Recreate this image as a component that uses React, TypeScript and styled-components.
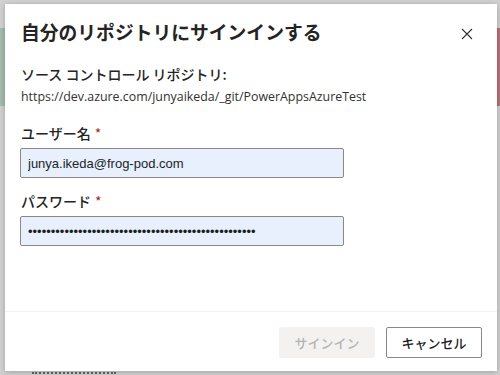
import React from "react";
import styled, { createGlobalStyle } from "styled-components";

const GlobalStyle = createGlobalStyle`
  html, body {
    margin: 0;
    padding: 0;
    background: #cfcfcf;
  }
  body {
    font-family: "Segoe UI", "Open Sans", "Noto Sans CJK JP", sans-serif;
    color: #323130;
  }
`;

const Backdrop = styled.div`
  position: relative;
  width: 500px;
  height: 375px;
  overflow: hidden;
  background: #d2d2d2;
  padding: 4px 3px 0 5px;
  box-sizing: border-box;
`;

const PeekStrip = styled.div<{ $side: "left" | "right"; $color: string }>`
  position: absolute;
  top: 28px;
  ${(p) => (p.$side === "left" ? "left: 0;" : "right: 0;")}
  width: 5px;
  height: 78px;
  background: ${(p) => p.$color};
`;

const PeekDots = styled.div`
  position: absolute;
  left: 32px;
  bottom: 1px;
  width: 84px;
  border-top: 2px dotted #666;
`;

const Dialog = styled.div`
  position: relative;
  width: 492px;
  height: 367px;
  background: #fff;
  box-shadow: 0 1px 6px rgba(0, 0, 0, 0.25);
  display: flex;
  flex-direction: column;
`;

const Header = styled.div`
  display: flex;
  align-items: flex-start;
  justify-content: space-between;
  padding: 13px 22px 0 16px;
`;

const Title = styled.h1`
  margin: 0;
  font-family: "Noto Sans CJK JP", sans-serif;
  font-size: 18.8px;
  font-weight: 700;
  line-height: 30px;
  color: #252423;
`;

const CloseButton = styled.button`
  border: none;
  background: none;
  padding: 0;
  margin-top: 9px;
  width: 16px;
  height: 16px;
  display: flex;
  align-items: center;
  justify-content: center;
  cursor: pointer;
`;

const Body = styled.div`
  flex: 1;
  padding: 17px 16px 0 16px;
  display: flex;
  flex-direction: column;
`;

const SourceLabel = styled.div`
  font-family: "Noto Sans CJK JP", sans-serif;
  font-size: 14px;
  font-weight: 500;
  line-height: 20px;
  color: #252423;
`;

const Url = styled.div`
  font-family: "Open Sans", sans-serif;
  font-size: 12.4px;
  line-height: 20px;
  margin-top: 3px;
  color: #323130;
`;

const Field = styled.div<{ $top: number }>`
  display: flex;
  flex-direction: column;
  margin-top: ${(p) => p.$top}px;
`;

const Label = styled.label`
  font-family: "Noto Sans CJK JP", sans-serif;
  font-size: 14px;
  font-weight: 500;
  line-height: 20px;
  color: #252423;
  margin-bottom: 5px;
`;

const Required = styled.span`
  color: #a4262c;
  margin-left: 4px;
  font-weight: 400;
`;

const Input = styled.input`
  width: 324px;
  height: 30px;
  box-sizing: border-box;
  margin: 0 0 0 -1px;
  padding: 0 7px;
  border: 1px solid #8a8886;
  border-radius: 2px;
  background: #e8f0fe;
  font-family: "Liberation Sans", Arial, sans-serif;
  font-size: 13px;
  color: #201f1e;
  outline: none;
`;

const Footer = styled.div`
  box-sizing: border-box;
  border-top: 1px solid #f3f2f1;
  height: 60px;
  display: flex;
  justify-content: flex-end;
  align-items: flex-start;
  gap: 11px;
  padding: 15px 15px 0 0;
`;

const Button = styled.button<{ $disabled?: boolean }>`
  width: 96px;
  height: 31px;
  box-sizing: border-box;
  border-radius: 2px;
  font-family: "Noto Sans CJK JP", sans-serif;
  font-size: 13px;
  font-weight: 500;
  border: 1px solid ${(p) => (p.$disabled ? "#f3f2f1" : "#8a8886")};
  background: ${(p) => (p.$disabled ? "#f3f2f1" : "#fff")};
  color: ${(p) => (p.$disabled ? "#b5b3b1" : "#201f1e")};
  cursor: ${(p) => (p.$disabled ? "default" : "pointer")};
`;

export default function App() {
  return (
    <>
      <GlobalStyle />
      <Backdrop>
        <PeekStrip $side="left" $color="#a5bcaf" />
        <PeekStrip $side="right" $color="#b9707a" />
        <PeekDots />
        <Dialog>
          <Header>
            <Title>自分のリポジトリにサインインする</Title>
            <CloseButton aria-label="閉じる">
              <svg width="12" height="12" viewBox="0 0 12 12">
                <path d="M1 1L11 11M11 1L1 11" stroke="#323130" strokeWidth="1.1" fill="none" />
              </svg>
            </CloseButton>
          </Header>
          <Body>
            <SourceLabel>ソース コントロール リポジトリ:</SourceLabel>
            <Url>https://dev.azure.com/junyaikeda/_git/PowerAppsAzureTest</Url>
            <Field $top={16}>
              <Label>
                ユーザー名<Required>*</Required>
              </Label>
              <Input type="text" defaultValue="junya.ikeda@frog-pod.com" />
            </Field>
            <Field $top={13}>
              <Label>
                パスワード<Required>*</Required>
              </Label>
              <Input type="password" defaultValue="aaaaaaaaaaaaaaaaaaaaaaaaaaaaaaaaaaaaaaaaaaaaaaaaaa" />
            </Field>
          </Body>
          <Footer>
            <Button $disabled disabled>
              サインイン
            </Button>
            <Button>キャンセル</Button>
          </Footer>
        </Dialog>
      </Backdrop>
    </>
  );
}
